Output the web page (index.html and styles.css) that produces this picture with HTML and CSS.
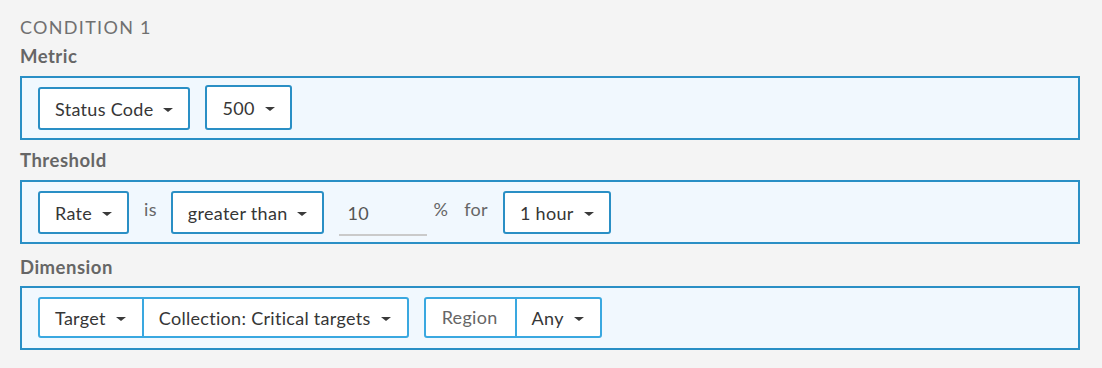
FILE: index.html
```html
<!DOCTYPE html>
<html>
<head>
<meta charset="utf-8">
<link rel="stylesheet" href="styles.css">
</head>
<body>
<div class="page">
  <div class="cond-title">CONDITION 1</div>

  <div class="field-label first">Metric</div>
  <div class="box">
    <div class="dd btn">Status Code <span class="caret"></span></div>
    <div class="dd btn tall">500 <span class="caret"></span></div>
  </div>

  <div class="field-label">Threshold</div>
  <div class="box">
    <div class="dd btn">Rate <span class="caret"></span></div>
    <span class="word is">is</span>
    <div class="dd btn">greater than <span class="caret"></span></div>
    <div class="num-input">10</div>
    <span class="word pct">%</span>
    <span class="word">for</span>
    <div class="dd btn">1 hour <span class="caret"></span></div>
  </div>

  <div class="field-label last">Dimension</div>
  <div class="box">
    <div class="group">
      <div class="dd seg">Target <span class="caret"></span></div>
      <div class="dd seg">Collection: Critical targets <span class="caret"></span></div>
    </div>
    <div class="group">
      <div class="seg label">Region</div>
      <div class="dd seg">Any <span class="caret"></span></div>
    </div>
  </div>
</div>
</body>
</html>
```

FILE: styles.css
```css
html, body {
  margin: 0;
  padding: 0;
  background: #f4f4f4;
}

body {
  font-family: Lato, "Noto Sans", sans-serif;
  font-size: 18px;
  line-height: 22px;
  letter-spacing: 0.3px;
  color: #363636;
}

.page {
  padding: 15px 22px 0 20px;
}

.cond-title {
  font-size: 18px;
  letter-spacing: 1.3px;
  color: #707070;
  line-height: 24px;
}

.field-label {
  font-weight: bold;
  font-size: 18.5px;
  letter-spacing: 0.5px;
  color: #666;
  line-height: 24px;
  margin: 8px 0 8px;
}

.field-label.first {
  margin-top: 5px;
}

.field-label.last {
  margin-top: 11px;
  margin-bottom: 7px;
}

.box {
  display: flex;
  align-items: flex-start;
  border: 2px solid #2a8fc5;
  background: #f1f8fe;
  padding: 9px 16px 8px;
  height: 43px;
}

.btn {
  height: 43px;
  box-sizing: border-box;
  border: 2px solid #2a8fc5;
  border-radius: 3px;
  background: #fff;
  padding: 0 15px 0 15px;
  display: flex;
  align-items: center;
  margin-right: 15px;
}

.btn.tall {
  height: 45px;
  margin-top: -2px;
}

.caret {
  display: inline-block;
  width: 0;
  height: 0;
  border-left: 5px solid transparent;
  border-right: 5px solid transparent;
  border-top: 4.5px solid #3a3a3a;
  margin-left: 10px;
  margin-top: 3px;
}

.word {
  color: #666;
  padding-top: 7px;
  margin-right: 15px;
}

.word.is {
  margin-right: 14px;
}

.word.pct {
  margin-right: 16px;
}

.num-input {
  width: 88px;
  height: 45px;
  box-sizing: border-box;
  padding: 11px 0 0 8px;
  border-bottom: 2px solid #cacaca;
  color: #555;
  margin-right: 6px;
}

.group {
  display: flex;
  height: 41px;
  box-sizing: border-box;
  border: 2px solid #3aa8e0;
  border-radius: 3px;
  background: #fff;
  margin-right: 15px;
}

.seg {
  display: flex;
  align-items: center;
  padding: 0 16px 0 15px;
}

.seg + .seg {
  border-left: 2px solid #3aa8e0;
}

.seg.label {
  color: #666;
  padding: 0 17px 2px 16px;
}
```
